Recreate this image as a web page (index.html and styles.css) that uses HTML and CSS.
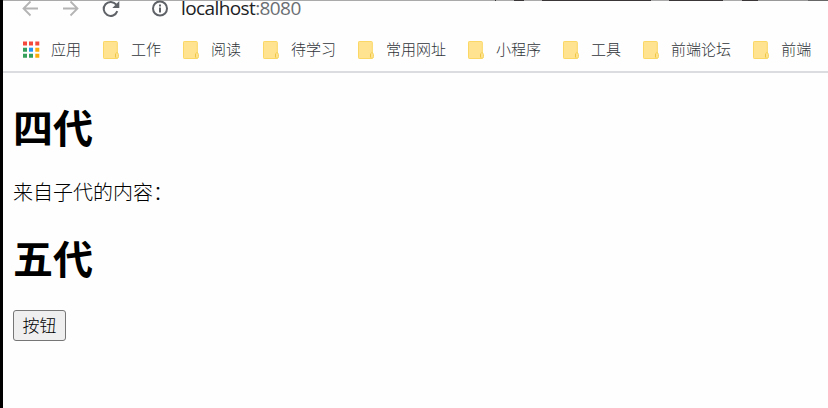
FILE: index.html
```
<!DOCTYPE html>
<html lang="zh-CN">
<head>
<meta charset="utf-8">
<title>localhost:8080</title>
<link rel="stylesheet" href="styles.css">
</head>
<body>
<svg width="0" height="0" class="defs">
  <symbol id="folder" viewBox="0 0 16 18">
    <path d="M1.200.5h12.300q.8 0 .8.8v15.200q0 1-1 1H1.200q-.7 0-.7-.7V1.200q0-.7.7-.7z" fill="#ffe391" stroke="#fbd865"/>
    <path d="M13.800 11.500q-1.300.3-1.300 2v2.300q0 1.600 1.400 1.600 1.500 0 1.500-1.600v-2.200q0-1.700-1.600-2.100z" fill="#ffe391" stroke="#f6d35c"/>
    <path d="M12.500 13v3" stroke="#efc548" fill="none"/>
  </symbol>
</svg>
<div class="window">
  <div class="tabs"></div>
  <header class="toolbar">
    <svg class="nav" width="18" height="16" viewBox="0 0 18 16"><path d="M16 7.500H1.500M8.500.5l-7 7 7 7" fill="none" stroke="#b4b4b4" stroke-width="1.800"/></svg>
    <svg class="nav" width="18" height="16" viewBox="0 0 18 16"><path d="M1 7.500h14.500M8.500.5l7 7-7 7" fill="none" stroke="#b4b4b4" stroke-width="1.800"/></svg>
    <svg class="reload" width="18" height="17" viewBox="0 0 18 17"><path d="M15.300 10.200A7 7 0 1 1 14.300 3.700" fill="none" stroke="#5f6368" stroke-width="2"/><path d="M17.300 0v7h-7z" fill="#5f6368"/></svg>
    <svg class="info" width="16" height="16" viewBox="0 0 16 16"><circle cx="8" cy="7.500" r="7" fill="none" stroke="#5f6368" stroke-width="2"/><path d="M8 6.500v5M8 3.500v2" stroke="#5f6368" stroke-width="2"/></svg>
    <div class="url">localhost<span class="port">:8080</span></div>
  </header>
  <nav class="bookmarks">
    <div class="item"><svg width="16" height="18" viewBox="0 0 16 18">
      <path d="M0 .5h4v4H0zM6 .5h4v4H6zM12.300.5h4v4h-4z" fill="#f44a3e"/>
      <path d="M0 6.700h4v4H0zM0 12.700h4v4H0zM6 12.700h4v4H6z" fill="#34a05c"/>
      <path d="M6 6.700h4v4H6z" fill="#2494f5"/>
      <path d="M12.300 6.700h4v4h-4zM12.300 12.700h4v4h-4z" fill="#fbac06"/></svg><span>应用</span></div>
    <div class="item"><svg width="16" height="18"><use href="#folder"/></svg><span>工作</span></div>
    <div class="item"><svg width="16" height="18"><use href="#folder"/></svg><span>阅读</span></div>
    <div class="item"><svg width="16" height="18"><use href="#folder"/></svg><span>待学习</span></div>
    <div class="item"><svg width="16" height="18"><use href="#folder"/></svg><span>常用网址</span></div>
    <div class="item"><svg width="16" height="18"><use href="#folder"/></svg><span>小程序</span></div>
    <div class="item"><svg width="16" height="18"><use href="#folder"/></svg><span>工具</span></div>
    <div class="item"><svg width="16" height="18"><use href="#folder"/></svg><span>前端论坛</span></div>
    <div class="item"><svg width="16" height="18"><use href="#folder"/></svg><span>前端</span></div>
  </nav>
  <main class="page">
    <h1>四代</h1>
    <p>来自子代的内容：</p>
    <h1>五代</h1>
    <button>按钮</button>
  </main>
</div>
</body>
</html>
```
FILE: styles.css
```
* { box-sizing: border-box; }
body {
  margin: 0;
  background: #fefefe;
  color: #000;
  font-family: "Noto Sans CJK SC", sans-serif;
  font-weight: 300;
}
.defs { display: none; }
.window {
  height: 408px;
  border-left: 3px solid #000;
  overflow: hidden;
}
.tabs {
  height: 1px;
  background: linear-gradient(90deg, #aaa 0 492px, #3a3638 492px 493px, #aaa 493px 511px, #3a3638 511px 521px, #aaa 521px 539px, #3a3638 539px 648px, #aaa 648px 666px, #3a3638 666px 720px, #aaa 720px 739px, #3a3638 739px 755px, #999 755px 805px, #666 805px);
}
.toolbar {
  display: flex;
  align-items: flex-start;
  height: 31px;
  padding-left: 19px;
}
.toolbar svg { flex: none; overflow: visible; }
.nav { margin-right: 22px; }
.reload { margin-right: 32px; }
.info { margin-right: 13px; }
.url {
  font: 19px/14px "Open Sans", sans-serif;
  letter-spacing: -0.6px;
  color: #202124;
}
.port { color: #6b6f73; }
.bookmarks {
  display: flex;
  align-items: center;
  gap: 22px;
  height: 41px;
  padding: 0 0 3px 20px;
  border-bottom: 2px solid #dadce0;
  font-size: 15px;
  line-height: 22px;
  color: #303438;
  white-space: nowrap;
}
.item {
  display: flex;
  flex: none;
  align-items: center;
  gap: 12px;
}
.item svg { overflow: visible; }
.item span { padding-bottom: 2px; }
.page { padding: 27px 10px 0; }
h1 {
  margin: 0;
  font-size: 40px;
  line-height: 53px;
  font-weight: 700;
}
p {
  margin: 26px 0;
  font-size: 20px;
  line-height: 26px;
}
button {
  display: block;
  width: 53px;
  height: 31px;
  margin-top: 26px;
  padding: 0 0 1px;
  border: 1px solid #767676;
  border-radius: 3px;
  background: #efefef;
  color: #000;
  font: 300 17px/24px "Noto Sans CJK SC", sans-serif;
}
```
